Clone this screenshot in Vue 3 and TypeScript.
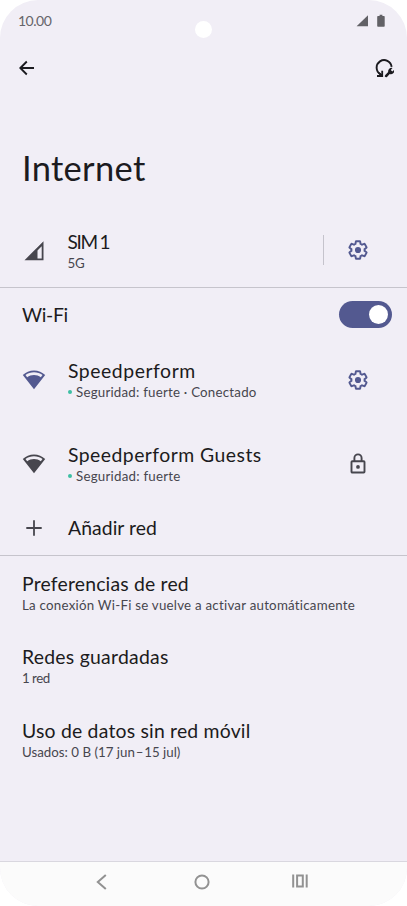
<script setup lang="ts">
interface Network {
  name: string
  detail: string
  connected: boolean
  nameClass: string
  detailClass: string
}
interface Preference {
  title: string
  summary: string
  titleClass: string
  summaryClass: string
}

const networks: Network[] = [
  { name: 'Speedperform', detail: 'Seguridad: fuerte · Conectado', connected: true, nameClass: 't-speed', detailClass: 's-conn' },
  { name: 'Speedperform Guests', detail: 'Seguridad: fuerte', connected: false, nameClass: 't-guests', detailClass: 's-strong' },
]

const preferences: Preference[] = [
  { title: 'Preferencias de red', summary: 'La conexión Wi-Fi se vuelve a activar automáticamente', titleClass: 't-pref', summaryClass: 's-pref' },
  { title: 'Redes guardadas', summary: '1 red', titleClass: 't-saved', summaryClass: 's-saved' },
  { title: 'Uso de datos sin red móvil', summary: 'Usados: 0 B (17 jun\u200a–\u200a15 jul)', titleClass: 't-usage', summaryClass: 's-usage' },
]

const gearPath =
  'M19.43 12.98c.04-.32.07-.64.07-.98 0-.34-.03-.66-.07-.98l2.11-1.65c.19-.15.24-.42.12-.64l-2-3.46c-.12-.22-.38-.31-.61-.22l-2.49 1c-.52-.4-1.08-.73-1.69-.98l-.38-2.65C14.46 2.18 14.25 2 14 2h-4c-.25 0-.46.18-.49.42l-.38 2.65c-.61.25-1.17.59-1.69.98l-2.49-1c-.23-.09-.49 0-.61.22l-2 3.46c-.13.22-.07.49.12.64l2.11 1.65c-.04.32-.07.65-.07.98 0 .33.03.66.07.98l-2.11 1.65c-.19.15-.24.42-.12.64l2 3.46c.12.22.38.31.61.22l2.49-1c.52.4 1.08.73 1.69.98l.38 2.65c.03.24.24.42.49.42h4c.25 0 .46-.18.49-.42l.38-2.65c.61-.25 1.17-.59 1.69-.98l2.49 1c.23.09.49 0 .61-.22l2-3.46c.12-.22.07-.49-.12-.64l-2.11-1.65z'
</script>

<template>
  <div class="phone">
    <div class="camera"></div>
    <header class="status">
      <span class="clock">10.00</span>
      <svg class="status-icons" width="30" height="14" viewBox="0 0 30 14">
        <path d="M13 1.200V12.200H1.600z" />
        <path d="M23 2h1.600V.8h2.800V2H29q.7 0 .7.8v9.100q0 .8-.7.8h-6q-.8 0-.8-.8V2.800q0-.8.8-.8z" />
      </svg>
    </header>

    <div class="appbar">
      <svg width="16" height="16" viewBox="0 0 16 16" class="line-icon">
        <path d="M15 8H1.700M7.800 1.500L1.300 8l6.500 6.500" />
      </svg>
      <svg width="20" height="20" viewBox="0 0 20 20" class="line-icon reset">
        <path d="M17.600 8.900A7.500 7.500 0 1 0 6.600 16.200" />
        <path class="solid" d="M9.100 12.800V18.900H3V17.100H5.600L4.100 15.600 5.500 14.300l1.800 1.800v-3.300z" />
        <path class="solid" d="M11.300 16.900l2.900-2.800a3.500 3.500 0 0 1 4.300-4.100l-1.700 1.900 1.500 1.500 1.900-1.600a3.500 3.500 0 0 1-4.500 4.200l-2.700 2.900q-1.100.6-1.900-.1t.2-1.900z" />
      </svg>
    </div>

    <h1 class="heading">Internet</h1>

    <section class="row sim">
      <div class="lead">
        <svg width="20" height="20" viewBox="0 0 20 20" class="muted">
          <path d="M19.500.2V19.200H.5zM17.700 5.300L13.500 9.500v7.900h4.200z" fill-rule="evenodd" />
        </svg>
      </div>
      <div class="text">
        <div class="title t-sim">SIM 1</div>
        <div class="sub s-sim">5G</div>
      </div>
      <div class="vline"></div>
      <div class="trail">
        <svg width="22" height="22" viewBox="-.5 -.5 25 25" class="gear">
          <path :d="gearPath" />
          <circle cx="12" cy="12" r="3.500" />
        </svg>
      </div>
    </section>
    <div class="hline"></div>

    <section class="wifi">
      <span class="title t-wifi">Wi-Fi</span>
      <div class="switch"><div class="knob"></div></div>
    </section>

    <section v-for="n in networks" :key="n.name" class="row network">
      <div class="lead">
        <svg width="24" height="20" viewBox="0 0 24 20" :class="n.connected ? 'accent' : 'muted'">
          <path d="M12 .4C7.700.4 3.700 2.100.8 5L12 19.200 23.200 5C20.300 2.100 16.300.4 12 .4zM12 2.300c3.200 0 6.100 1 8.500 2.800l-1.700 2.200C16.800 5.900 14.500 5.100 12 5.100S7.200 5.900 5.200 7.300L3.500 5.100c2.400-1.800 5.300-2.800 8.500-2.800z" fill-rule="evenodd" />
        </svg>
      </div>
      <div class="text">
        <div class="title" :class="n.nameClass">{{ n.name }}</div>
        <div class="sub with-dot"><i class="dot"></i><span :class="n.detailClass">{{ n.detail }}</span></div>
      </div>
      <div class="trail">
        <svg v-if="n.connected" width="22" height="22" viewBox="-.5 -.5 25 25" class="gear">
          <path :d="gearPath" />
          <circle cx="12" cy="12" r="3.500" />
        </svg>
        <svg v-else width="16" height="22" viewBox="0 0 16 22" class="lock">
          <rect x="1.500" y="8.200" width="13" height="11.300" rx=".8" />
          <path d="M4.400 8.200V5a3.600 3.600 0 0 1 7.200 0v3.200" />
          <circle cx="8" cy="13.900" r="1.900" />
        </svg>
      </div>
    </section>

    <section class="row add">
      <div class="lead">
        <svg width="16" height="16" viewBox="0 0 16 16" class="plus"><path d="M8 .3v15.400M.3 8h15.400" /></svg>
      </div>
      <div class="text"><div class="title t-add">Añadir red</div></div>
    </section>
    <div class="hline"></div>

    <section v-for="p in preferences" :key="p.title" class="pref">
      <div class="title" :class="p.titleClass">{{ p.title }}</div>
      <div class="sub" :class="p.summaryClass">{{ p.summary }}</div>
    </section>

    <nav class="navbar">
      <svg width="12" height="16" viewBox="0 0 12 16"><path d="M9.800 1L1.800 8l8 7" /></svg>
      <svg width="16" height="16" viewBox="0 0 16 16"><circle cx="8" cy="8" r="6.600" /></svg>
      <svg width="16" height="16" viewBox="0 0 16 16"><path d="M1.200 .5v13M14.700 .5v13M5.100 1.500h5.700v11H5.100z" /></svg>
    </nav>
  </div>
</template>

<style>
body {
  background: #fff;
}
</style>

<style scoped>
.phone {
  position: relative;
  box-sizing: border-box;
  display: flex;
  flex-direction: column;
  width: 407px;
  height: 906px;
  overflow: hidden;
  border-radius: 38px;
  background: #f1eef6;
  color: #1c1b20;
  font-family: Lato, "Liberation Sans", sans-serif;
  font-variant-ligatures: none;
  white-space: nowrap;
}
.camera {
  position: absolute;
  left: 195px;
  top: 21px;
  width: 17px;
  height: 17px;
  border-radius: 50%;
  background: #fff;
}
.status {
  display: flex;
  justify-content: space-between;
  align-items: center;
  height: 41px;
  padding: 0 22px 0 18px;
  box-sizing: border-box;
}
.clock {
  color: #66656a;
  font-size: 14px;
  letter-spacing: -0.5px;
}
.status-icons {
  fill: #626166;
}
.appbar {
  display: flex;
  justify-content: space-between;
  align-items: center;
  height: 54px;
  padding: 0 13px 0 19px;
}
.line-icon {
  fill: none;
  stroke: #1c1b20;
  stroke-width: 1.900;
}
.line-icon .solid {
  fill: #1c1b20;
  stroke: none;
}
.heading {
  margin: 0;
  padding: 52px 22px 0;
  height: 67px;
  line-height: 42px;
  font-size: 34.500px;
  font-weight: 400;
  letter-spacing: 0.3px;
}
.row {
  display: flex;
  align-items: center;
}
.lead {
  display: flex;
  justify-content: center;
  width: 68px;
}
.text {
  flex: 1;
}
.trail {
  display: flex;
  justify-content: center;
  width: 98px;
}
.lead svg,
.trail svg {
  display: block;
}
.title {
  font-size: 19.400px;
  line-height: 24px;
}
.sub {
  font-size: 13.300px;
  line-height: 18px;
  color: #47464e;
}
.t-sim {
  font-size: 19px;
  letter-spacing: -1.3px;
  word-spacing: -1px;
}
.t-wifi {
  letter-spacing: -0.3px;
}
.t-speed {
  letter-spacing: 0.55px;
}
.t-guests {
  letter-spacing: 0.46px;
}
.t-add {
  letter-spacing: 0.06px;
}
.t-pref {
  letter-spacing: 0.18px;
}
.t-saved {
  letter-spacing: 0.25px;
}
.t-usage {
  letter-spacing: 0.2px;
}
.s-sim {
  letter-spacing: -0.2px;
}
.s-conn {
  letter-spacing: 0.22px;
}
.s-strong {
  letter-spacing: 0.24px;
}
.s-pref {
  letter-spacing: 0.24px;
}
.s-saved {
  letter-spacing: -0.5px;
}
.with-dot {
  display: flex;
  align-items: center;
  gap: 4px;
}
.dot {
  width: 4px;
  height: 4px;
  border-radius: 50%;
  background: #3dbfa3;
}
.sim {
  height: 73px;
}
.vline {
  width: 1px;
  height: 30px;
  margin: 0 -14px 2px 0;
  background: #c5c3cc;
}
.sim .text {
  flex: 0 0 255px;
}
.sim .trail {
  margin-left: auto;
  padding-bottom: 1px;
}
.hline {
  flex: none;
  height: 1px;
  background: #c6c4cc;
}
.wifi {
  display: flex;
  align-items: center;
  justify-content: space-between;
  height: 45px;
  padding: 4px 15px 1px 22px;
}
.switch {
  display: flex;
  align-items: center;
  justify-content: flex-end;
  box-sizing: border-box;
  width: 53px;
  height: 27px;
  padding-right: 4px;
  border-radius: 14px;
  background: #535990;
}
.knob {
  width: 19px;
  height: 19px;
  border-radius: 50%;
  background: #fff;
}
.network {
  height: 84.200px;
}
.network .lead,
.network .trail {
  padding-bottom: 1px;
}
.accent {
  fill: #535990;
}
.muted {
  fill: #47464e;
}
.gear path {
  fill: none;
  stroke: #535990;
  stroke-width: 2.200;
}
.gear circle {
  fill: #535990;
}
.lock {
  fill: none;
  stroke: #47464e;
  stroke-width: 1.900;
}
.lock circle {
  fill: #47464e;
  stroke: none;
}
.plus {
  stroke: #47464e;
  stroke-width: 1.800;
}
.add {
  height: 43px;
  padding-bottom: 5.600px;
}
.pref {
  display: flex;
  flex-direction: column;
  justify-content: center;
  height: 73.500px;
  padding-left: 22px;
}
.navbar {
  display: flex;
  align-items: flex-start;
  box-sizing: border-box;
  height: 45px;
  margin-top: auto;
  padding: 11.500px 99px 0 96px;
  justify-content: space-between;
  border-top: 1px solid #d9d7df;
  background: #fbfbfb;
}
.navbar svg {
  fill: none;
  stroke: #929292;
  stroke-width: 2;
}
.navbar svg:nth-child(2) {
  margin-left: 3px;
}
</style>
